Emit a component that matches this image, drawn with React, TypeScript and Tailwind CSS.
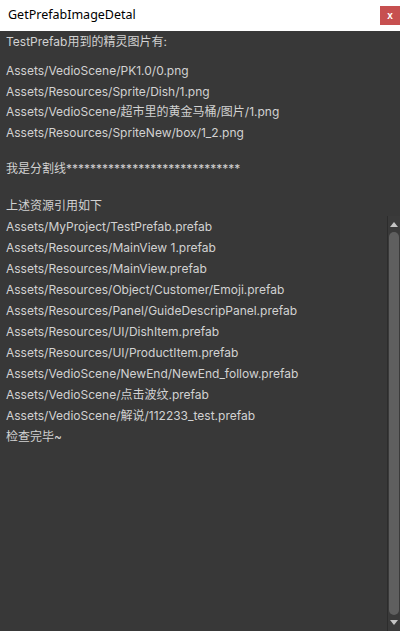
import React from "react";

const topFiles = [
  "Assets/VedioScene/PK1.0/0.png",
  "Assets/Resources/Sprite/Dish/1.png",
  "Assets/VedioScene/超市里的黄金马桶/图片/1.png",
  "Assets/Resources/SpriteNew/box/1_2.png",
];

const refs = [
  "Assets/MyProject/TestPrefab.prefab",
  "Assets/Resources/MainView 1.prefab",
  "Assets/Resources/MainView.prefab",
  "Assets/Resources/Object/Customer/Emoji.prefab",
  "Assets/Resources/Panel/GuideDescripPanel.prefab",
  "Assets/Resources/UI/DishItem.prefab",
  "Assets/Resources/UI/ProductItem.prefab",
  "Assets/VedioScene/NewEnd/NewEnd_follow.prefab",
  "Assets/VedioScene/点击波纹.prefab",
  "Assets/VedioScene/解说/112233_test.prefab",
  "检查完毕~",
];

export default function App() {
  const font = { fontFamily: 'Inter, "Noto Sans CJK SC", sans-serif' };
  return (
    <div className="w-[400px] h-[631px] flex flex-col bg-[#383838] overflow-hidden">
      <div className="h-[31px] bg-white flex items-center justify-between shrink-0">
        <span
          className="pl-[8px] text-[12.5px] text-black"
          style={{ fontFamily: '"Noto Sans", "Liberation Sans", sans-serif' }}
        >
          GetPrefabImageDetal
        </span>
        <div className="w-[20px] h-[19px] bg-[#c75050] flex items-center justify-center text-white text-[10px] font-bold leading-none" style={{ fontFamily: '"Liberation Sans", sans-serif' }}>
          x
        </div>
      </div>
      <div className="flex-1 flex flex-col text-[12px] leading-[21px] text-[#d2d2d2]" style={font}>
        <div className="px-[6px]">
          <div>TestPrefab用到的精灵图片有:</div>
          <div className="mt-[9px]">
            {topFiles.map((f) => (
              <div key={f} className="leading-[20.7px]">{f}</div>
            ))}
          </div>
          <div className="mt-[14px]">我是分割线*****************************</div>
          <div className="mt-[16px]">上述资源引用如下</div>
        </div>
        <div className="flex-1 flex">
          <div className="flex-1 px-[6px]">
            {refs.map((r) => (
              <div key={r}>{r}</div>
            ))}
          </div>
          <div className="w-[13px] border-l border-[#2c2c2c] bg-[#3a3a3a] flex flex-col items-center">
            <div className="mt-[6px] w-0 h-0 border-l-[4px] border-r-[4px] border-b-[5px] border-l-transparent border-r-transparent border-b-[#c4c4c4]" />
            <div className="mt-[5px] w-[10px] flex-1 rounded-[5px] bg-[#5f5f5f]" />
            <div className="mt-[5px] mb-[6px] w-0 h-0 border-l-[4px] border-r-[4px] border-t-[5px] border-l-transparent border-r-transparent border-t-[#c4c4c4]" />
          </div>
        </div>
      </div>
    </div>
  );
}
